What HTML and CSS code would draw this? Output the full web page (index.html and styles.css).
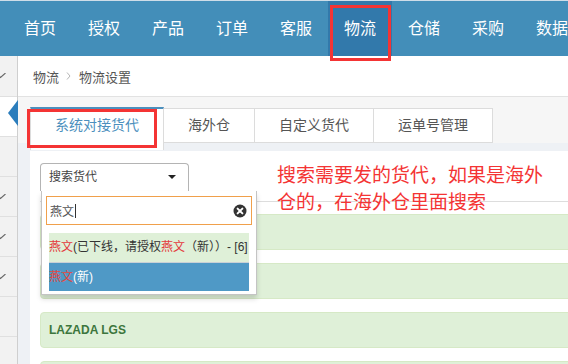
FILE: index.html
```html
<!DOCTYPE html>
<html lang="zh-CN">
<head>
<meta charset="utf-8">
<title>物流设置</title>
<link rel="stylesheet" href="styles.css">
</head>
<body>
<nav class="navbar">
  <a class="nav-item">首页</a>
  <a class="nav-item">授权</a>
  <a class="nav-item">产品</a>
  <a class="nav-item">订单</a>
  <a class="nav-item">客服</a>
  <a class="nav-item active">物流</a>
  <a class="nav-item">仓储</a>
  <a class="nav-item">采购</a>
  <a class="nav-item">数据</a>
</nav>
<div class="main">
  <aside class="sidebar">
    <div class="side-row"><svg class="side-icon" viewBox="0 0 6 6"><path d="M-3 0.5 L0.5 4.5 L5.5 0" fill="none" stroke="#666" stroke-width="1.1"/></svg></div>
    <div class="side-row active"><span class="side-pointer"></span></div>
    <div class="side-row"></div>
    <div class="side-row"><svg class="side-icon" viewBox="0 0 6 6"><path d="M-3 0.5 L0.5 4.5 L5.5 0" fill="none" stroke="#666" stroke-width="1.1"/></svg></div>
    <div class="side-row"><svg class="side-icon" viewBox="0 0 6 6"><path d="M-3 0.5 L0.5 4.5 L5.5 0" fill="none" stroke="#666" stroke-width="1.1"/></svg></div>
    <div class="side-row"><svg class="side-icon" viewBox="0 0 6 6"><path d="M-3 0.5 L0.5 4.5 L5.5 0" fill="none" stroke="#666" stroke-width="1.1"/></svg></div>
    <div class="side-row"></div>
    <div class="side-row"></div>
  </aside>
  <section class="content">
    <div class="breadcrumbs">
      <span>物流</span>
      <svg class="crumb-sep" viewBox="0 0 5 8"><path d="M1 0.5 L4 4 L1 7.5" fill="none" stroke="#b5b5b5" stroke-width="1"/></svg>
      <span>物流设置</span>
    </div>
    <div class="tabbar">
      <ul class="tabs">
        <li class="tab active">系统对接货代</li>
        <li class="tab">海外仓</li>
        <li class="tab">自定义货代</li>
        <li class="tab">运单号管理</li>
      </ul>
    </div>
    <div class="page">
      <div class="panel">
        <div class="filter">
          <div class="chosen">
            <div class="chosen-single">搜索货代<span class="caret"></span></div>
            <div class="chosen-drop">
              <div class="chosen-search">
                <span class="typed">燕文</span><span class="cursor"></span>
                <svg class="clear" viewBox="0 0 14 14"><circle cx="7" cy="7" r="6.5" fill="#333"/><path d="M4.6 4.6 L9.4 9.4 M9.4 4.6 L4.6 9.4" stroke="#fff" stroke-width="2" stroke-linecap="round"/></svg>
              </div>
              <ul class="results">
                <li class="result matched"><em>燕文</em>(已下线，请授权<em>燕文</em>（新））- [6]</li>
                <li class="result highlighted"><em>燕文</em>(新)</li>
              </ul>
            </div>
          </div>
        </div>
        <div class="list">
          <div class="bar"></div>
          <div class="bar"></div>
          <div class="bar">LAZADA LGS</div>
          <div class="bar"></div>
        </div>
      </div>
    </div>
  </section>
</div>
<div class="note">搜索需要发的货代，如果是海外<br>仓的，在海外仓里面搜索</div>
<div class="mark mark-nav"></div>
<div class="mark mark-tab"></div>
</body>
</html>
```

FILE: styles.css
```css
html, body {
  margin: 0;
  padding: 0;
}
body {
  width: 568px;
  height: 364px;
  overflow: hidden;
  position: relative;
  background: #fff;
  font-family: "Liberation Sans", "Noto Sans CJK SC", sans-serif;
}
.navbar {
  display: flex;
  height: 55px;
  border-top: 1px solid #cfdde8;
  background: #438eb9;
  padding-left: 8px;
  white-space: nowrap;
}
.nav-item {
  flex: none;
  width: 64px;
  text-align: center;
  line-height: 55px;
  font-size: 16px;
  color: #fff;
}
.nav-item.active {
  background: #3279ab;
}
.main {
  display: flex;
  height: 308px;
}
.sidebar {
  flex: none;
  width: 17px;
  background: #f2f2f2;
  border-right: 1px solid #cfcfcf;
}
.side-row {
  position: relative;
  height: 39px;
  border-bottom: 1px solid #e0e0e0;
}
.side-row:first-child {
  height: 40px;
}
.side-row.active {
  background: #fff;
}
.side-pointer {
  position: absolute;
  right: -1px;
  top: 3px;
  width: 0;
  height: 0;
  border-right: 10px solid #2b7dbc;
  border-top: 13px solid transparent;
  border-bottom: 13px solid transparent;
}
.side-icon {
  position: absolute;
  left: 0;
  top: 17px;
  width: 6px;
  height: 6px;
}
.content {
  flex: 1;
  min-width: 0;
  display: flex;
  flex-direction: column;
  overflow: hidden;
}
.breadcrumbs {
  flex: none;
  height: 40px;
  border-bottom: 1px solid #e2e2e2;
  padding-left: 15px;
  display: flex;
  align-items: center;
  font-size: 13px;
  color: #555;
}
.crumb-sep {
  width: 5px;
  height: 8px;
  margin: 0 8px 0 7px;
}
.tabbar {
  flex: none;
  background: #f6f6f6;
  padding: 10px 0 0 12px;
}
.tabs {
  display: flex;
  align-items: flex-start;
  height: 36px;
  list-style: none;
  margin: 0;
  padding: 0;
}
.tab {
  flex: none;
  margin-top: 1px;
  margin-left: -1px;
  height: 33px;
  line-height: 33px;
  padding: 0 24px;
  border: 1px solid #dcdcdc;
  background: #fff;
  font-size: 14px;
  color: #555;
}
.tab:first-child {
  margin-left: 0;
}
.tab.active {
  position: relative;
  z-index: 1;
  margin-top: 0;
  border-top: 2px solid #4c8fbd;
  border-bottom: 0;
  padding-bottom: 8px;
  color: #4c8fbd;
}
.page {
  flex: 1;
  background: #eef1f5;
  padding: 8px 0 0 12px;
}
.panel {
  width: 560px;
  height: 100%;
  background: #fff;
  padding: 12px 10px 0;
}
.filter {
  padding-bottom: 10px;
  border-bottom: 1px solid #dddddd;
}
.chosen {
  position: relative;
  width: 149px;
}
.chosen-single {
  position: relative;
  box-sizing: border-box;
  width: 149px;
  height: 28px;
  border: 1px solid #b4b4b4;
  border-bottom: 0;
  border-radius: 4px 4px 0 0;
  padding-left: 8px;
  font-size: 12px;
  line-height: 27px;
  color: #444;
  background: #fff;
}
.caret {
  position: absolute;
  right: 12px;
  top: 11px;
  width: 0;
  height: 0;
  border-top: 4px solid #222;
  border-left: 4px solid transparent;
  border-right: 4px solid transparent;
}
.chosen-drop {
  position: absolute;
  z-index: 5;
  top: 28px;
  left: 1px;
  box-sizing: border-box;
  width: 216px;
  background: #fff;
  border: 1px solid #c4c4c4;
  border-top: 0;
  box-shadow: 0 4px 5px rgba(0, 0, 0, 0.15);
  padding: 5px 4px 3px;
}
.chosen-search {
  position: relative;
  display: flex;
  align-items: center;
  height: 27px;
  border: 1px solid #f0a04b;
  padding-left: 3px;
  font-size: 12px;
  color: #555;
}
.cursor {
  width: 1px;
  height: 14px;
  margin-left: 1px;
  background: #333;
}
.clear {
  position: absolute;
  right: 4px;
  top: 7px;
  width: 14px;
  height: 14px;
}
.results {
  list-style: none;
  margin: 8px 3px 0;
  padding: 0;
}
.result {
  height: 29px;
  line-height: 29px;
  font-size: 12px;
  white-space: nowrap;
  overflow: hidden;
  color: #333;
}
.result em {
  font-style: normal;
  color: #e4393c;
}
.result.matched {
  background: #dff0d8;
}
.result.highlighted {
  height: 28px;
  line-height: 28px;
  border-top: 1px solid #c9d1d6;
  background: #4f99c6;
  color: #fff;
}
.result.highlighted em {
  color: #e4473f;
}
.list {
  margin-top: 12px;
  display: flex;
  flex-direction: column;
  gap: 13px;
}
.bar {
  flex: none;
  height: 34px;
  line-height: 34px;
  border: 1px solid #d6e9c6;
  border-radius: 4px;
  background: #dff0d8;
  padding-left: 8px;
  font-size: 12px;
  font-weight: bold;
  color: #3c763d;
}
.note {
  position: absolute;
  z-index: 10;
  left: 277px;
  top: 160px;
  font-family: "Noto Sans CJK SC", sans-serif;
  font-size: 19px;
  line-height: 27px;
  color: #f43434;
  white-space: nowrap;
}
.mark {
  position: absolute;
  z-index: 10;
  box-sizing: border-box;
  border: 3px solid #f43434;
}
.mark-nav {
  left: 330px;
  top: 5px;
  width: 61px;
  height: 56px;
}
.mark-tab {
  left: 27px;
  top: 109px;
  width: 130px;
  height: 39px;
}
```
